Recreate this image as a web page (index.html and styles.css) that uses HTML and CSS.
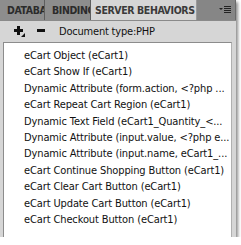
FILE: index.html
```html
<!DOCTYPE html>
<html lang="en">
<head>
    <meta charset="UTF-8">
    <title>Server Behaviors</title>
    <link rel="stylesheet" href="styles.css">
</head>
<body>

<div class="panel">
    <div class="tabs">
        <div class="tab tab-db">DATABASES</div>
        <div class="tab tab-bind">BINDINGS</div>
        <div class="tab active">SERVER BEHAVIORS</div>
        <div class="tab-rest">
            <svg class="menu-icon" width="12" height="9" viewBox="0 0 12 9">
                <path d="M0 2h4l-2 2z" fill="#222"/>
                <rect x="5" y="0" width="7" height="1" fill="#222"/>
                <rect x="5" y="2" width="7" height="1" fill="#222"/>
                <rect x="5" y="4" width="7" height="1" fill="#222"/>
                <rect x="5" y="6" width="7" height="1" fill="#222"/>
            </svg>
        </div>
    </div>

    <div class="toolbar">
        <svg class="tool" width="12" height="12" viewBox="0 0 12 12">
            <rect x="3" y="0" width="3" height="9" fill="#111"/>
            <rect x="0" y="3" width="9" height="3" fill="#111"/>
            <path d="M7 11h4v-4z" fill="#111"/>
        </svg>
        <svg class="tool" width="9" height="12" viewBox="0 0 9 12">
            <rect x="0" y="3" width="8" height="3" fill="#111"/>
        </svg>
        <span class="doctype">Document type:PHP</span>
    </div>

    <ul class="list">
        <li>eCart Object (eCart1)</li>
        <li>eCart Show If (eCart1)</li>
        <li>Dynamic Attribute (form.action, &lt;?php ...</li>
        <li>eCart Repeat Cart Region (eCart1)</li>
        <li>Dynamic Text Field (eCart1_Quantity_&lt;...</li>
        <li>Dynamic Attribute (input.value, &lt;?php e...</li>
        <li>Dynamic Attribute (input.name, eCart1_...</li>
        <li>eCart Continue Shopping Button (eCart1)</li>
        <li>eCart Clear Cart Button (eCart1)</li>
        <li>eCart Update Cart Button (eCart1)</li>
        <li>eCart Checkout Button (eCart1)</li>
    </ul>
</div>

</body>
</html>
```

FILE: styles.css
```css
body {
    margin: 0;
    background-color: #fff;
    font-family: "DejaVu Sans Condensed", "DejaVu Sans", sans-serif;
    font-stretch: condensed;
}

.panel {
    width: 236px;
    height: 237px;
    background-color: #d6d6d6;
    box-shadow: 2px 2px 3px rgba(0, 0, 0, 0.45);
    display: flex;
    flex-direction: column;
    overflow: hidden;
}

.tabs {
    display: flex;
    height: 20px;
    background-color: #868686;
    border-bottom: 1px solid #8a8a8a;
}

.tab {
    box-sizing: border-box;
    height: 20px;
    padding: 4px 0 0 7px;
    font-weight: bold;
    font-size: 10.5px;
    letter-spacing: -0.4px;
    color: #2b2b2b;
    background-color: #8d8d8d;
    border-right: 1px solid #5e5e5e;
    white-space: nowrap;
    overflow: hidden;
}

.tab-db {
    width: 45px;
}

.tab-bind {
    width: 46px;
}

.tab.active {
    width: 106px;
    padding-left: 4px;
    background-color: #d6d6d6;
    color: #3a3a3a;
    border-right: 1px solid #9a9a9a;
}

.tab-rest {
    flex: 1;
    display: flex;
    justify-content: flex-end;
    align-items: center;
    padding-right: 4px;
    border-right: 1px solid #6a6a6a;
}

.toolbar {
    height: 21px;
    display: flex;
    align-items: center;
    padding-left: 14px;
}

.tool {
    margin-right: 11px;
}

.doctype {
    margin-left: 2px;
    font-size: 11px;
    letter-spacing: -0.2px;
    color: #111;
}

.list {
    flex: 1;
    list-style: none;
    margin: 0 4px 0 3px;
    padding: 5px 0 0 20px;
    background-color: #fff;
    border: 1px solid #8c8c8c;
    border-right-color: #b0b0b0;
    border-bottom: none;
    font-size: 11px;
    letter-spacing: -0.12px;
    color: #111;
}

.list li {
    height: 16.4px;
    line-height: 16.4px;
    white-space: nowrap;
}
```
